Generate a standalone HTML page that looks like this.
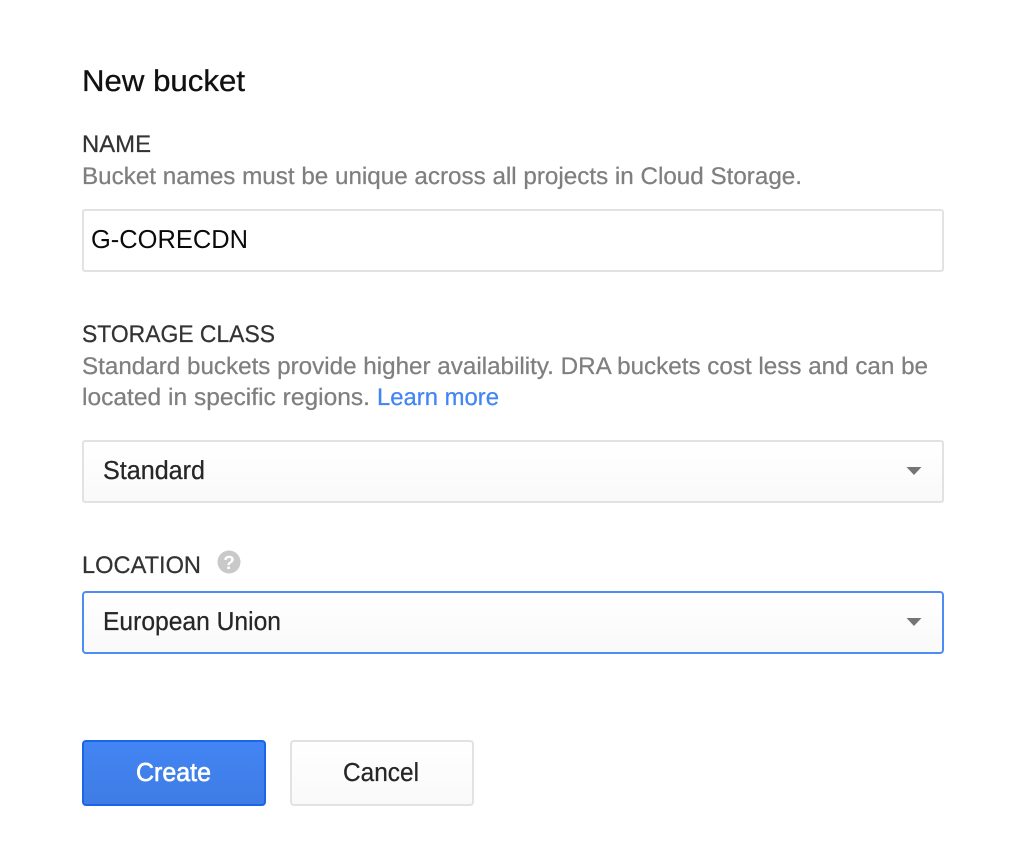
<!DOCTYPE html>
<html>
<head>
<meta charset="utf-8">
<title>New bucket</title>
<style>
html,body{margin:0;padding:0;background:#fff;width:1024px;height:863px;overflow:hidden}
svg{display:block;position:absolute;left:0;top:0}
text{font-family:"Liberation Sans",sans-serif;text-rendering:geometricPrecision}
.l{font-size:24px;fill:#333;stroke:#333;stroke-width:.25px}
.h{font-size:24px;fill:#7f7f7f;stroke:#7f7f7f;stroke-width:.25px}
.v{font-size:26px;fill:#262626;stroke:#262626;stroke-width:.25px}
</style>
</head>
<body>
<svg width="1024" height="863" viewBox="0 0 1024 863" xmlns="http://www.w3.org/2000/svg">
<defs>
<linearGradient id="g" x1="0" y1="0" x2="0" y2="1"><stop offset="0" stop-color="#ffffff"/><stop offset="1" stop-color="#f9f9f9"/></linearGradient>
<linearGradient id="b" x1="0" y1="0" x2="0" y2="1"><stop offset="0" stop-color="#4285f4"/><stop offset="1" stop-color="#3f7ce4"/></linearGradient>
</defs>
<text x="82" y="91" font-size="30" fill="#111" stroke="#111" stroke-width=".3" textLength="163" lengthAdjust="spacingAndGlyphs">New bucket</text>

<text class="l" x="82" y="152" textLength="69" lengthAdjust="spacingAndGlyphs">NAME</text>
<text class="h" x="82" y="184" textLength="720" lengthAdjust="spacingAndGlyphs">Bucket names must be unique across all projects in Cloud Storage.</text>
<rect x="83" y="210" width="860" height="61" rx="2" fill="#fff" stroke="#e2e2e2" stroke-width="2"/>
<text x="91" y="248" font-size="26" fill="#0a0a0a" textLength="157" lengthAdjust="spacingAndGlyphs">G-CORECDN</text>

<text class="l" x="82" y="342" textLength="193" lengthAdjust="spacingAndGlyphs">STORAGE CLASS</text>
<text class="h" x="82" y="374" textLength="846" lengthAdjust="spacingAndGlyphs">Standard buckets provide higher availability. DRA buckets cost less and can be</text>
<text class="h" x="82" y="405" textLength="288" lengthAdjust="spacingAndGlyphs">located in specific regions.</text>
<text x="377" y="405" font-size="24" fill="#4285f4" stroke="#4285f4" stroke-width=".25" textLength="122" lengthAdjust="spacingAndGlyphs">Learn more</text>

<rect x="83" y="441" width="860" height="61" rx="2" fill="url(#g)" stroke="#e2e2e2" stroke-width="2"/>
<text class="v" x="103" y="479" textLength="102" lengthAdjust="spacingAndGlyphs">Standard</text>
<path d="M906.500 467H921.500L914 475Z" fill="#757575"/>

<text class="l" x="82" y="573" textLength="119" lengthAdjust="spacingAndGlyphs">LOCATION</text>
<circle cx="229" cy="562" r="11.500" fill="#c9c9c9"/>
<text x="229" y="569" font-size="19" font-weight="700" fill="#fff" text-anchor="middle">?</text>

<rect x="83" y="592" width="860" height="61" rx="3" fill="url(#g)" stroke="#4d8bf5" stroke-width="2"/>
<text class="v" x="103" y="630" textLength="178" lengthAdjust="spacingAndGlyphs">European Union</text>
<path d="M906.500 618H921.500L914 626Z" fill="#757575"/>

<rect x="83" y="741" width="182" height="64" rx="3" fill="url(#b)" stroke="#1a66e8" stroke-width="2"/>
<text x="136" y="781" font-size="26" fill="#fff" stroke="#fff" stroke-width=".6" textLength="75" lengthAdjust="spacingAndGlyphs">Create</text>
<rect x="291" y="741" width="182" height="64" rx="3" fill="url(#g)" stroke="#e2e2e2" stroke-width="2"/>
<text class="v" x="343" y="781" textLength="76" lengthAdjust="spacingAndGlyphs">Cancel</text>
</svg>
</body>
</html>
